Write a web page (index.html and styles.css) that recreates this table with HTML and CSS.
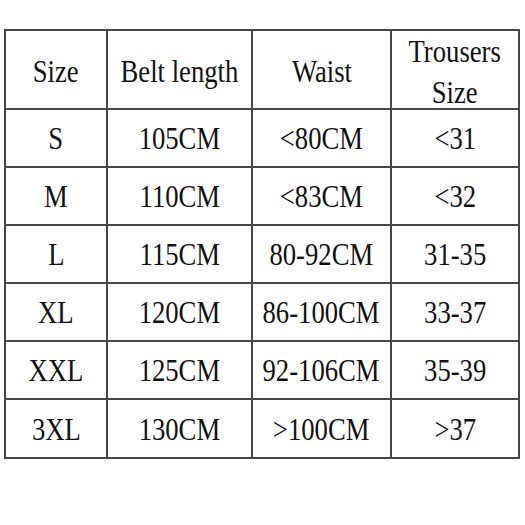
FILE: index.html
```html
<!DOCTYPE html>
<html>
<head>
<meta charset="utf-8">
<link rel="stylesheet" href="styles.css">
</head>
<body>
<div class="table">
  <div class="cell head"><span>Size</span></div>
  <div class="cell head"><span>Belt length</span></div>
  <div class="cell head"><span>Waist</span></div>
  <div class="cell head two"><span>Trousers<br>Size</span></div>

  <div class="cell"><span>S</span></div>
  <div class="cell"><span>105CM</span></div>
  <div class="cell"><span>&lt;80CM</span></div>
  <div class="cell"><span>&lt;31</span></div>

  <div class="cell"><span>M</span></div>
  <div class="cell"><span>110CM</span></div>
  <div class="cell"><span>&lt;83CM</span></div>
  <div class="cell"><span>&lt;32</span></div>

  <div class="cell"><span>L</span></div>
  <div class="cell"><span>115CM</span></div>
  <div class="cell"><span>80-92CM</span></div>
  <div class="cell"><span>31-35</span></div>

  <div class="cell"><span>XL</span></div>
  <div class="cell"><span>120CM</span></div>
  <div class="cell"><span>86-100CM</span></div>
  <div class="cell"><span>33-37</span></div>

  <div class="cell"><span>XXL</span></div>
  <div class="cell"><span>125CM</span></div>
  <div class="cell"><span>92-106CM</span></div>
  <div class="cell"><span>35-39</span></div>

  <div class="cell"><span>3XL</span></div>
  <div class="cell"><span>130CM</span></div>
  <div class="cell"><span>&gt;100CM</span></div>
  <div class="cell"><span>&gt;37</span></div>
</div>
</body>
</html>
```

FILE: styles.css
```css
html, body {
  margin: 0;
  padding: 0;
  background: #ffffff;
}
body {
  width: 525px;
  height: 525px;
  overflow: hidden;
}
.table {
  margin: 29px 0 0 4px;
  width: 516px;
  height: 430px;
  box-sizing: border-box;
  padding: 2px;
  background: #474747;
  display: grid;
  grid-template-columns: 100px 143px 137px 126px;
  grid-template-rows: 77px 56px 56px 56px 56px 56px 57px;
  gap: 2px;
}
.cell {
  background: #ffffff;
  display: flex;
  align-items: center;
  justify-content: center;
  box-sizing: border-box;
  padding-top: 2px;
  font-family: "Liberation Serif", "Times New Roman", serif;
  font-size: 31px;
  color: #111111;
  text-align: center;
}
.cell.head {
  padding-top: 4px;
}
.cell span {
  display: inline-block;
  white-space: nowrap;
  transform: scaleX(0.86);
  transform-origin: center;
}
.cell.two span {
  line-height: 41px;
}
```
